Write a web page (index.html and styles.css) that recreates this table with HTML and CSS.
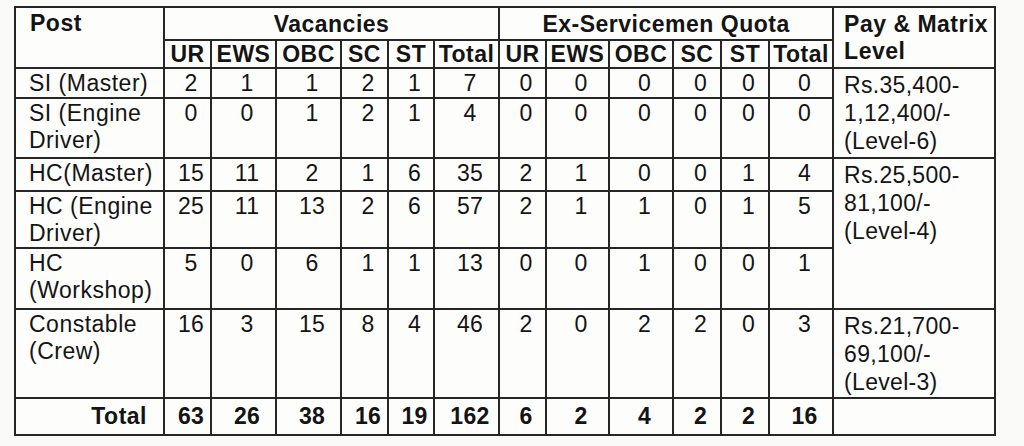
FILE: index.html
```html
<!DOCTYPE html>
<html lang="en">
<head>
<meta charset="utf-8">
<title>Vacancies</title>
<link rel="stylesheet" href="styles.css">
</head>
<body>
<table class="vac">
  <colgroup>
    <col class="c-post">
    <col class="c-n47"><col class="c-n65"><col class="c-n65"><col class="c-n47"><col class="c-n46"><col class="c-n65">
    <col class="c-n47"><col class="c-n63"><col class="c-n64"><col class="c-n48"><col class="c-n48"><col class="c-n64">
    <col class="c-pay">
  </colgroup>
  <thead>
    <tr class="h1">
      <th rowspan="2" class="post-h">Post</th>
      <th colspan="6" class="grp">Vacancies</th>
      <th colspan="6" class="grp">Ex-Servicemen Quota</th>
      <th rowspan="2" class="pay-h">Pay &amp; Matrix<br>Level</th>
    </tr>
    <tr class="h2">
      <th>UR</th><th>EWS</th><th>OBC</th><th>SC</th><th>ST</th><th>Total</th>
      <th>UR</th><th>EWS</th><th>OBC</th><th>SC</th><th>ST</th><th>Total</th>
    </tr>
  </thead>
  <tbody>
    <tr class="r30">
      <td class="post">SI (Master)</td>
      <td>2</td><td>1</td><td>1</td><td>2</td><td>1</td><td>7</td>
      <td>0</td><td>0</td><td>0</td><td>0</td><td>0</td><td>0</td>
      <td rowspan="2" class="pay">Rs.35,400-<br>1,12,400/-<br>(Level-6)</td>
    </tr>
    <tr class="r60">
      <td class="post">SI (Engine<br>Driver)</td>
      <td>0</td><td>0</td><td>1</td><td>2</td><td>1</td><td>4</td>
      <td>0</td><td>0</td><td>0</td><td>0</td><td>0</td><td>0</td>
    </tr>
    <tr class="r33">
      <td class="post">HC(Master)</td>
      <td>15</td><td>11</td><td>2</td><td>1</td><td>6</td><td>35</td>
      <td>2</td><td>1</td><td>0</td><td>0</td><td>1</td><td>4</td>
      <td rowspan="3" class="pay">Rs.25,500-<br>81,100/-<br>(Level-4)</td>
    </tr>
    <tr class="r57">
      <td class="post">HC (Engine<br>Driver)</td>
      <td>25</td><td>11</td><td>13</td><td>2</td><td>6</td><td>57</td>
      <td>2</td><td>1</td><td>1</td><td>0</td><td>1</td><td>5</td>
    </tr>
    <tr class="r61">
      <td class="post">HC<br>(Workshop)</td>
      <td>5</td><td>0</td><td>6</td><td>1</td><td>1</td><td>13</td>
      <td>0</td><td>0</td><td>1</td><td>0</td><td>0</td><td>1</td>
    </tr>
    <tr class="r89">
      <td class="post">Constable<br>(Crew)</td>
      <td>16</td><td>3</td><td>15</td><td>8</td><td>4</td><td>46</td>
      <td>2</td><td>0</td><td>2</td><td>2</td><td>0</td><td>3</td>
      <td class="pay">Rs.21,700-<br>69,100/-<br>(Level-3)</td>
    </tr>
    <tr class="total">
      <td class="post-total">Total</td>
      <td>63</td><td>26</td><td>38</td><td>16</td><td>19</td><td>162</td>
      <td>6</td><td>2</td><td>4</td><td>2</td><td>2</td><td>16</td>
      <td class="pay"></td>
    </tr>
  </tbody>
</table>
</body>
</html>
```

FILE: styles.css
```css
html, body {
  margin: 0;
  background: #fafaf9;
}
body {
  padding: 6px 0 0 14px;
  font-family: "Liberation Sans", Arial, sans-serif;
  color: #141414;
}
.vac {
  border-collapse: collapse;
  table-layout: fixed;
  width: 980px;
  font-size: 23px;
  line-height: 27px;
  letter-spacing: 0.3px;
  background: #fdfdfc;
}
.vac th, .vac td {
  border: 2px solid #262626;
  padding: 0;
  vertical-align: top;
  overflow: hidden;
  white-space: nowrap;
}
.c-post { width: 149px; }
.c-n46 { width: 46px; }
.c-n47 { width: 47px; }
.c-n48 { width: 48px; }
.c-n63 { width: 63px; }
.c-n64 { width: 64px; }
.c-n65 { width: 65px; }
.c-pay { width: 162px; }

.h1 { height: 33px; }
.h2 { height: 28px; }
.r30 { height: 30px; }
.r60 { height: 60px; }
.r33 { height: 33px; }
.r57 { height: 57px; }
.r61 { height: 61px; }
.r89 { height: 89px; }
.total { height: 37px; }

.vac th {
  font-weight: bold;
  letter-spacing: 0.5px;
}
.vac th.post-h {
  text-align: left;
  padding: 2px 0 0 14px;
}
.vac th.grp {
  text-align: center;
  vertical-align: bottom;
  padding: 0 0 1px 0;
}
.vac .h2 th {
  text-align: center;
  vertical-align: middle;
  line-height: 25px;
  padding: 0;
}
.vac th.pay-h {
  text-align: left;
  padding: 3px 0 0 10px;
  line-height: 27px;
}

.vac td {
  text-align: center;
  padding: 1px 0 0 7px;
}
.vac td.post {
  text-align: left;
  padding: 1px 0 0 13px;
  letter-spacing: 0.5px;
}
.vac td.pay {
  text-align: left;
  padding: 2px 0 0 10px;
  line-height: 28px;
}
.vac .total td {
  font-weight: bold;
  vertical-align: middle;
  padding-top: 0;
}
.vac td.post-total {
  text-align: right;
  padding: 0 16px 0 0;
  letter-spacing: 0.5px;
}
```
